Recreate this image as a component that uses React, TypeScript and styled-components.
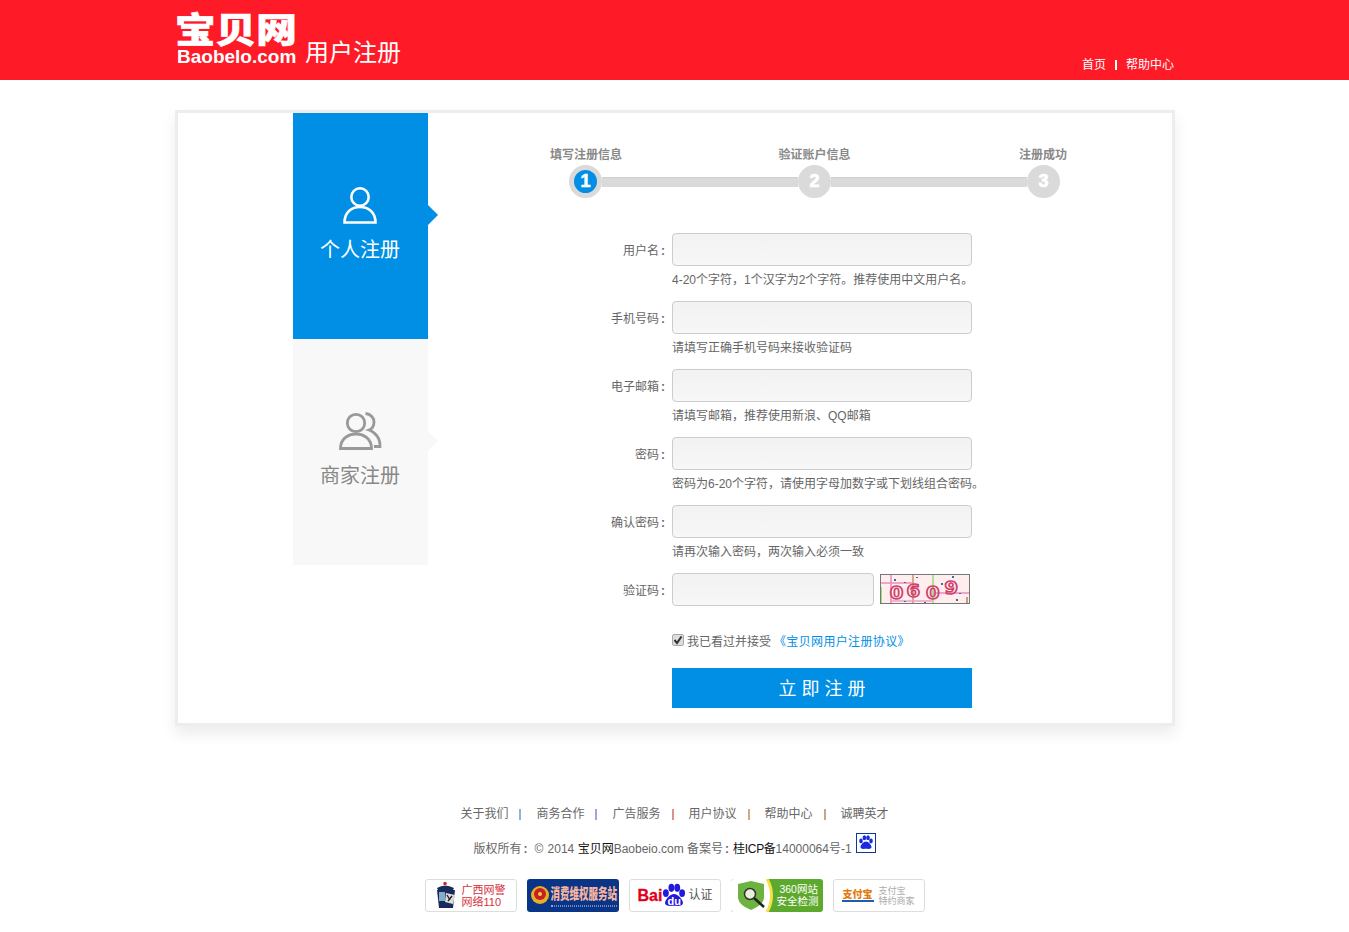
// App.tsx
import React from 'react';
import styled, { createGlobalStyle } from 'styled-components';

const FONT = `"Liberation Sans", "Noto Sans CJK SC", sans-serif`;

const GlobalStyle = createGlobalStyle`
  html, body {
    margin: 0;
    padding: 0;
    background: #fff;
    font-family: ${FONT};
    font-size: 12px;
    color: #666;
  }
`;

// --- Header ---

const HeaderBar = styled.header`
  height: 80px;
  background: #ff1a27;
  color: #fff;
`;

const HeaderInner = styled.div`
  width: 999px;
  height: 80px;
  margin-left: 175px;
  display: flex;
  align-items: flex-end;
  justify-content: space-between;
`;

const LogoGroup = styled.div`
  display: flex;
  align-items: flex-end;
  gap: 6px;
  height: 80px;
`;

const Logo = styled.div`
  width: 124px;
  height: 70px;
  display: flex;
  flex-direction: column;
`;

const LogoCn = styled.div`
  font-size: 35px;
  line-height: 32px;
  height: 32px;
  font-weight: 900;
  white-space: nowrap;
  margin-top: 5px;
  transform: scaleX(1.16);
  transform-origin: top left;
  -webkit-text-stroke: 0.6px #fff;
`;

const LogoEn = styled.div`
  font-size: 19px;
  line-height: 20px;
  font-weight: 700;
  white-space: nowrap;
  margin: 0 0 0 2px;
`;

const PageTitle = styled.div`
  font-size: 24px;
  line-height: 28px;
  font-weight: 400;
  margin-bottom: 13px;
  white-space: nowrap;
`;

const TopNav = styled.nav`
  display: flex;
  align-items: center;
  height: 16px;
  margin-bottom: 7px;
  line-height: 18px;
`;

const TopNavDivider = styled.span`
  width: 2px;
  height: 10px;
  margin: 0 9px;
  background: #fff;
`;

// --- Card ---

const Card = styled.section`
  width: 1000px;
  box-sizing: border-box;
  margin: 30px 0 0 175px;
  border: 3px solid #ededed;
  box-shadow: 0 8px 14px rgba(0, 0, 0, 0.08);
  display: flex;
  align-items: flex-start;
  padding: 0 0 15px 115px;
`;

const Tabs = styled.div`
  width: 135px;
  flex: none;
`;

const Tab = styled.div<{ $active?: boolean }>`
  position: relative;
  height: 226px;
  box-sizing: border-box;
  padding-top: 73px;
  display: flex;
  flex-direction: column;
  align-items: center;
  background: ${(p) => (p.$active ? '#008fe5' : '#f8f8f8')};
  color: ${(p) => (p.$active ? '#fff' : '#888')};

  &::after {
    content: '';
    position: absolute;
    left: 100%;
    top: 92px;
    border-left: 10px solid ${(p) => (p.$active ? '#008fe5' : '#f8f8f8')};
    border-top: 10px solid transparent;
    border-bottom: 10px solid transparent;
  }
`;

const TabIcon = styled.svg`
  display: block;
  width: 44px;
  height: 40px;
  margin-left: -2px;
`;

const TabLabel = styled.div`
  font-size: 20px;
  line-height: 28px;
  margin: 10px 0 0 -1px;
  font-weight: 400;
`;

const Main = styled.div`
  flex: 1;
`;

// --- Steps ---

const Steps = styled.div`
  width: 557px;
  margin: 34px 0 35px 108px;
`;

const StepLabels = styled.div`
  display: flex;
  justify-content: space-between;
  margin-bottom: 4px;
`;

const StepLabel = styled.div`
  width: 100px;
  text-align: center;
  font-weight: 700;
  line-height: 16px;
  height: 14px;
  color: #888;
  white-space: nowrap;
`;

const StepTrack = styled.div`
  display: flex;
  align-items: center;
  padding: 0 33px;
`;

const StepCircle = styled.div<{ $active?: boolean }>`
  width: 33px;
  height: 33px;
  flex: none;
  box-sizing: border-box;
  border-radius: 50%;
  border: 5px solid #dadada;
  background: ${(p) => (p.$active ? '#008fe5' : '#dadada')};
  color: #fff;
  font-size: 18px;
  font-weight: 700;
  -webkit-text-stroke: 0.7px #fff;
  display: flex;
  align-items: center;
  justify-content: center;
`;

const StepRail = styled.div`
  flex: 1;
  height: 10px;
  background: #dadada;
  border-top: 1px solid #cfcfcf;
  box-sizing: border-box;
`;

// --- Form ---

const Form = styled.form`
  margin-left: 137px;
`;

const Field = styled.div`
  display: flex;
  align-items: center;
  gap: 7px;
`;

const FieldLabel = styled.label`
  width: 100px;
  text-align: right;
  color: #666;
  white-space: nowrap;
`;

const Colon = styled.b<{ $gap?: number }>`
  margin: 0 ${(p) => p.$gap ?? 0}px 0 2px;
`;

const TextInput = styled.input<{ $w?: number }>`
  width: ${(p) => p.$w ?? 300}px;
  height: 33px;
  box-sizing: border-box;
  padding: 0 8px;
  border: 1px solid #ccc;
  border-radius: 4px;
  background: linear-gradient(#f2f2f2, #f7f7f7);
  outline: none;
`;

const Hint = styled.div`
  margin: 0 0 7px 107px;
  line-height: 28px;
  color: #666;
  white-space: nowrap;
`;

const Captcha = styled.svg`
  display: block;
  width: 90px;
  height: 30px;
  margin: -2px 0 0 -1px;
`;

const AgreeRow = styled.div`
  margin: 24px 0 18px 107px;
  height: 20px;
  display: flex;
  align-items: center;
  gap: 3px;
  white-space: nowrap;
`;

const FakeCheck = styled.span`
  width: 12px;
  height: 12px;
  box-sizing: border-box;
  border: 1px solid #aaa;
  border-radius: 2px;
  background: #ddd;
  display: flex;
  align-items: center;
  justify-content: center;
`;

const AgreeLink = styled.a`
  color: #008fe5;
  text-decoration: none;
  letter-spacing: 0.35px;
`;

const SubmitButton = styled.button`
  display: block;
  width: 300px;
  height: 40px;
  margin-left: 107px;
  border: 0;
  background: #008fe5;
  color: #fff;
  font-family: ${FONT};
  font-size: 18px;
  font-weight: 400;
  padding: 0 0 2px;
`;

// --- Footer ---

const Footer = styled.footer`
  margin-top: 79px;
  display: flex;
  flex-direction: column;
  align-items: center;
`;

const FooterLinks = styled.div`
  display: flex;
  align-items: center;
  height: 18px;
  line-height: 18px;
`;

const FooterDivider = styled.span<{ $color: string }>`
  width: 2px;
  height: 11px;
  margin: 0 15px 0 11px;
  background: ${(p) => p.$color};
`;

const Copyright = styled.div`
  display: flex;
  align-items: flex-start;
  margin-top: 13px;
  height: 26px;
  line-height: 26px;
  white-space: pre;
`;

const Dark = styled.span<{ $tight?: boolean }>`
  color: #111;
  letter-spacing: ${(p) => (p.$tight ? '-0.3px' : '0')};
`;

const Year = styled.span`
  margin-left: 1px;
`;

const PawBox = styled.svg`
  display: block;
  width: 20px;
  height: 20px;
  margin: -3px 0 0 4px;
`;

const Badges = styled.div`
  display: flex;
  gap: 10px;
  margin-top: 17px;
  padding-bottom: 20px;
`;

const Badge = styled.div<{ $bg?: string; $border?: boolean }>`
  width: 92px;
  height: 33px;
  box-sizing: border-box;
  border-radius: 3px;
  background: ${(p) => p.$bg ?? '#fff'};
  border: ${(p) => (p.$border ? '1px solid #ddd' : '0')};
  display: flex;
  align-items: center;
  overflow: hidden;
`;

const BadgeIcon = styled.svg`
  display: block;
  flex: none;
`;

const BadgeLines = styled.div<{ $color: string; $size?: number; $shift?: number }>`
  font-size: ${(p) => p.$size ?? 11}px;
  line-height: ${(p) => (p.$size ?? 11) + 1}px;
  font-weight: 400;
  color: ${(p) => p.$color};
  white-space: nowrap;
  margin-left: ${(p) => p.$shift ?? 0}px;
`;

const PoliceBanner = styled.div`
  width: 66px;
  color: #f4b4a0;
  font-size: 9.5px;
  font-weight: 900;
  line-height: 14px;
  white-space: nowrap;
  transform: scaleY(1.5);
  border-bottom: 1px dotted #8fa4d0;
`;

const BaiduMark = styled.div`
  display: flex;
  align-items: center;
  margin-left: 8px;
  font-size: 16px;
  font-weight: 700;
  color: #e1001a;
  -webkit-text-stroke: 0.3px #e1001a;
`;

const BaiduPaw = styled.span`
  position: relative;
  display: block;
  width: 26px;
  height: 29px;
  margin: 0 1px 0 -1px;
`;

const BaiduDu = styled.span`
  position: absolute;
  left: 6px;
  top: 14px;
  color: #fff;
  font-size: 11px;
  line-height: 12px;
  -webkit-text-stroke: 0;
`;

const BaiduText = styled.span`
  -webkit-text-stroke: 0;
`;

const AlipayText = styled.div`
  width: 32px;
  text-align: center;
  color: #e07a10;
  font-size: 10px;
  font-weight: 900;
  letter-spacing: 0;
  line-height: 11px;
  border-bottom: 2px solid #1c5fb0;
  margin: 0 5px 0 8px;
`;

// --- Drawings ---

const UserIcon = () => (
  <TabIcon viewBox="0 0 44 40" fill="none" stroke="#fff" strokeWidth="2.6">
    <circle cx="22" cy="11" r="8.7" />
    <path d="M6.5 36.5 C6.5 26 14 21 22 21 C30 21 37.5 26 37.5 36.5 Z" />
  </TabIcon>
);

const UsersIcon = () => (
  <TabIcon viewBox="0 0 44 40" fill="none" stroke="#999" strokeWidth="2.8">
    <circle cx="18" cy="11" r="8.7" />
    <path d="M2.5 36.5 C2.5 27 10 22 18 22 C26 22 33.5 27 33.5 36.5 Z" />
    <path d="M27.5 1.5 C33 2 36 6 36 10 C36 14 33.5 17 31 18 C37 20 42.5 26 42 34.5 L36 34.5" />
  </TabIcon>
);

const PawGlyph = ({ fill }: { fill: string }) => (
  <g fill={fill}>
    <ellipse cx="5" cy="8" rx="1.8" ry="2.4" />
    <ellipse cx="8.4" cy="4.8" rx="1.8" ry="2.5" />
    <ellipse cx="12" cy="4.8" rx="1.8" ry="2.5" />
    <ellipse cx="15" cy="8" rx="1.8" ry="2.4" />
    <path d="M10 8.5 C12.5 8.5 15.5 12 15.5 14 C15.5 16.5 12 15.8 10 15.8 C8 15.8 4.5 16.5 4.5 14 C4.5 12 7.5 8.5 10 8.5 Z" />
  </g>
);

const CaptchaImage = () => (
  <Captcha viewBox="0 0 90 30">
    <rect width="90" height="30" fill="#ffeeee" />
    <g strokeWidth="1.5" fill="none">
      <path d="M11 0 V30" stroke="#e88cc0" />
      <path d="M33 0 V30" stroke="#c89070" />
      <path d="M53 0 V30" stroke="#90e070" />
      <path d="M1 9 H32" stroke="#e88cc0" />
      <path d="M1 13 V30" stroke="#70e050" />
      <path d="M55 19 H90" stroke="#e88cc0" />
      <path d="M10 27 H52" stroke="#e8a0c8" />
      <path d="M87 23 V30" stroke="#b08060" />
    </g>
    <g
      fill="none"
      stroke="#d0406c"
      strokeWidth="1.5"
      fontFamily="'DejaVu Sans', sans-serif"
      fontSize="17"
      fontWeight="700"
      transform="scale(1.15 1)"
    >
      <text x="8.5" y="25.5">0</text>
      <text x="23" y="23">6</text>
      <text x="40" y="25.5">0</text>
      <text x="56" y="20">9</text>
    </g>
    <g fill="#5060a0">
      <rect x="14" y="5" width="2" height="2" />
      <rect x="24" y="8" width="2" height="1" />
      <rect x="36" y="3" width="2" height="1" />
      <rect x="61" y="9" width="2" height="2" />
      <rect x="72" y="2" width="2" height="2" />
      <rect x="76" y="25" width="2" height="2" />
      <rect x="24" y="27" width="2" height="1" />
      <rect x="44" y="28" width="2" height="1" />
      <rect x="79" y="19" width="2" height="1" />
    </g>
    <rect x="0.5" y="0.5" width="89" height="29" fill="none" stroke="#777" />
  </Captcha>
);

const hints: React.ReactNode[] = [
  '4-20个字符，1个汉字为2个字符。推荐使用中文用户名。',
  '请填写正确手机号码来接收验证码',
  '请填写邮箱，推荐使用新浪、QQ邮箱',
  '密码为6-20个字符，请使用字母加数字或下划线组合密码。',
  '请再次输入密码，两次输入必须一致',
];

const fieldLabels = ['用户名', '手机号码', '电子邮箱', '密码', '确认密码'];

const footerLinks: [string, string][] = [
  ['关于我们', '#8fb4dc'],
  ['商务合作', '#a4a4dc'],
  ['广告服务', '#dc9090'],
  ['用户协议', '#d4a880'],
  ['帮助中心', '#c4a880'],
];

export default function App() {
  return (
    <>
      <GlobalStyle />
      <HeaderBar>
        <HeaderInner>
          <LogoGroup>
            <Logo>
              <LogoCn>宝贝网</LogoCn>
              <LogoEn>Baobelo.com</LogoEn>
            </Logo>
            <PageTitle>用户注册</PageTitle>
          </LogoGroup>
          <TopNav>
            <span>首页</span>
            <TopNavDivider />
            <span>帮助中心</span>
          </TopNav>
        </HeaderInner>
      </HeaderBar>

      <Card>
        <Tabs>
          <Tab $active>
            <UserIcon />
            <TabLabel>个人注册</TabLabel>
          </Tab>
          <Tab>
            <UsersIcon />
            <TabLabel>商家注册</TabLabel>
          </Tab>
        </Tabs>

        <Main>
          <Steps>
            <StepLabels>
              <StepLabel>填写注册信息</StepLabel>
              <StepLabel>验证账户信息</StepLabel>
              <StepLabel>注册成功</StepLabel>
            </StepLabels>
            <StepTrack>
              <StepCircle $active>1</StepCircle>
              <StepRail />
              <StepCircle>2</StepCircle>
              <StepRail />
              <StepCircle>3</StepCircle>
            </StepTrack>
          </Steps>

          <Form>
            {fieldLabels.map((label, i) => (
              <React.Fragment key={label}>
                <Field>
                  <FieldLabel>
                    {label}
                    <Colon>:</Colon>
                  </FieldLabel>
                  <TextInput />
                </Field>
                <Hint>{hints[i]}</Hint>
              </React.Fragment>
            ))}
            <Field>
              <FieldLabel>
                验证码
                <Colon>:</Colon>
              </FieldLabel>
              <TextInput $w={202} />
              <CaptchaImage />
            </Field>
            <AgreeRow>
              <FakeCheck>
                <svg width="10" height="10" viewBox="0 0 10 10" fill="none" stroke="#333" strokeWidth="2">
                  <path d="M1.5 5 L4 8 L8.5 1.5" />
                </svg>
              </FakeCheck>
              我已看过并接受
              <AgreeLink href="#">《宝贝网用户注册协议》</AgreeLink>
            </AgreeRow>
            <SubmitButton type="button">立 即 注 册</SubmitButton>
          </Form>
        </Main>
      </Card>

      <Footer>
        <FooterLinks>
          {footerLinks.map(([text, color]) => (
            <React.Fragment key={text}>
              <span>{text}</span>
              <FooterDivider $color={color} />
            </React.Fragment>
          ))}
          <span>诚聘英才</span>
        </FooterLinks>
        <Copyright>
          <span>
            版权所有<Colon $gap={7}>:</Colon>© <Year>2014</Year> <Dark>宝贝网</Dark>Baobeio.com 备案号<Colon $gap={4}>:</Colon>
            <Dark $tight>桂ICP备</Dark>14000064号-1
          </span>
          <PawBox viewBox="0 0 20 20">
            <rect x="0.5" y="0.5" width="19" height="19" fill="#fff" stroke="#0a3a9a" />
            <PawGlyph fill="#1a2ae0" />
          </PawBox>
        </Copyright>
        <Badges>
          <Badge $border>
            <BadgeIcon width="37" height="31" viewBox="0 0 37 31">
              <circle cx="19" cy="3.5" r="1.8" fill="#c03030" />
              <path d="M11 8 Q19 3 28 8 L27 10 H12 Z" fill="#1a2a5a" />
              <path d="M11 10 H29 L27 28 H13 Z" fill="#1a2a5a" />
              <rect x="13" y="12" width="6" height="9" fill="#7fb0c8" />
              <path d="M20 13 L29 15 L27 24 L19 22 Z" fill="#ddd" />
              <path d="M21 15 L24 20 M26 16 L22 21" stroke="#222" strokeWidth="1.4" />
            </BadgeIcon>
            <BadgeLines $color="#d8303c" $shift={-1}>
              广西网警
              <br />
              网络110
            </BadgeLines>
          </Badge>
          <Badge $bg="#0a3586">
            <BadgeIcon width="24" height="33" viewBox="0 0 24 33">
              <circle cx="13" cy="16" r="9" fill="#e8b020" />
              <circle cx="13" cy="15" r="6" fill="#c81e28" />
              <circle cx="13" cy="15" r="2" fill="#f0d040" />
            </BadgeIcon>
            <PoliceBanner>消费维权服务站</PoliceBanner>
          </Badge>
          <Badge $border>
            <BaiduMark>
              Bai
              <BaiduPaw>
                <svg width="26" height="29" viewBox="2 1 16 17">
                  <PawGlyph fill="#2319dc" />
                </svg>
                <BaiduDu>du</BaiduDu>
              </BaiduPaw>
              <BaiduText>
                <BadgeLines $color="#555" $size={12}>认证</BadgeLines>
              </BaiduText>
            </BaiduMark>
          </Badge>
          <Badge $bg="#5da92e">
            <BadgeIcon width="46" height="33" viewBox="0 0 46 33">
              <path d="M0 0 H36 C42 10 42 23 36 33 H0 Z" fill="#fff" />
              <path d="M36 0 C42 10 42 23 36 33" stroke="#f5e04a" strokeWidth="3" fill="none" />
              <path d="M7 5 L20 2 L33 5 V18 C33 24 27 28 20 31 C13 28 7 24 7 18 Z" fill="#6cb33f" />
              <circle cx="19" cy="15" r="5.5" fill="#e8f0d8" stroke="#333" strokeWidth="1.5" />
              <path d="M23 19 L33 28" stroke="#222" strokeWidth="2.5" />
            </BadgeIcon>
            <BadgeLines $color="#fff" $size={10.5}>
              &nbsp;360网站
              <br />
              安全检测
            </BadgeLines>
          </Badge>
          <Badge $border>
            <AlipayText>支付宝</AlipayText>
            <BadgeLines $color="#aaa" $size={9}>
              支付宝
              <br />
              特约商家
            </BadgeLines>
          </Badge>
        </Badges>
      </Footer>
    </>
  );
}
